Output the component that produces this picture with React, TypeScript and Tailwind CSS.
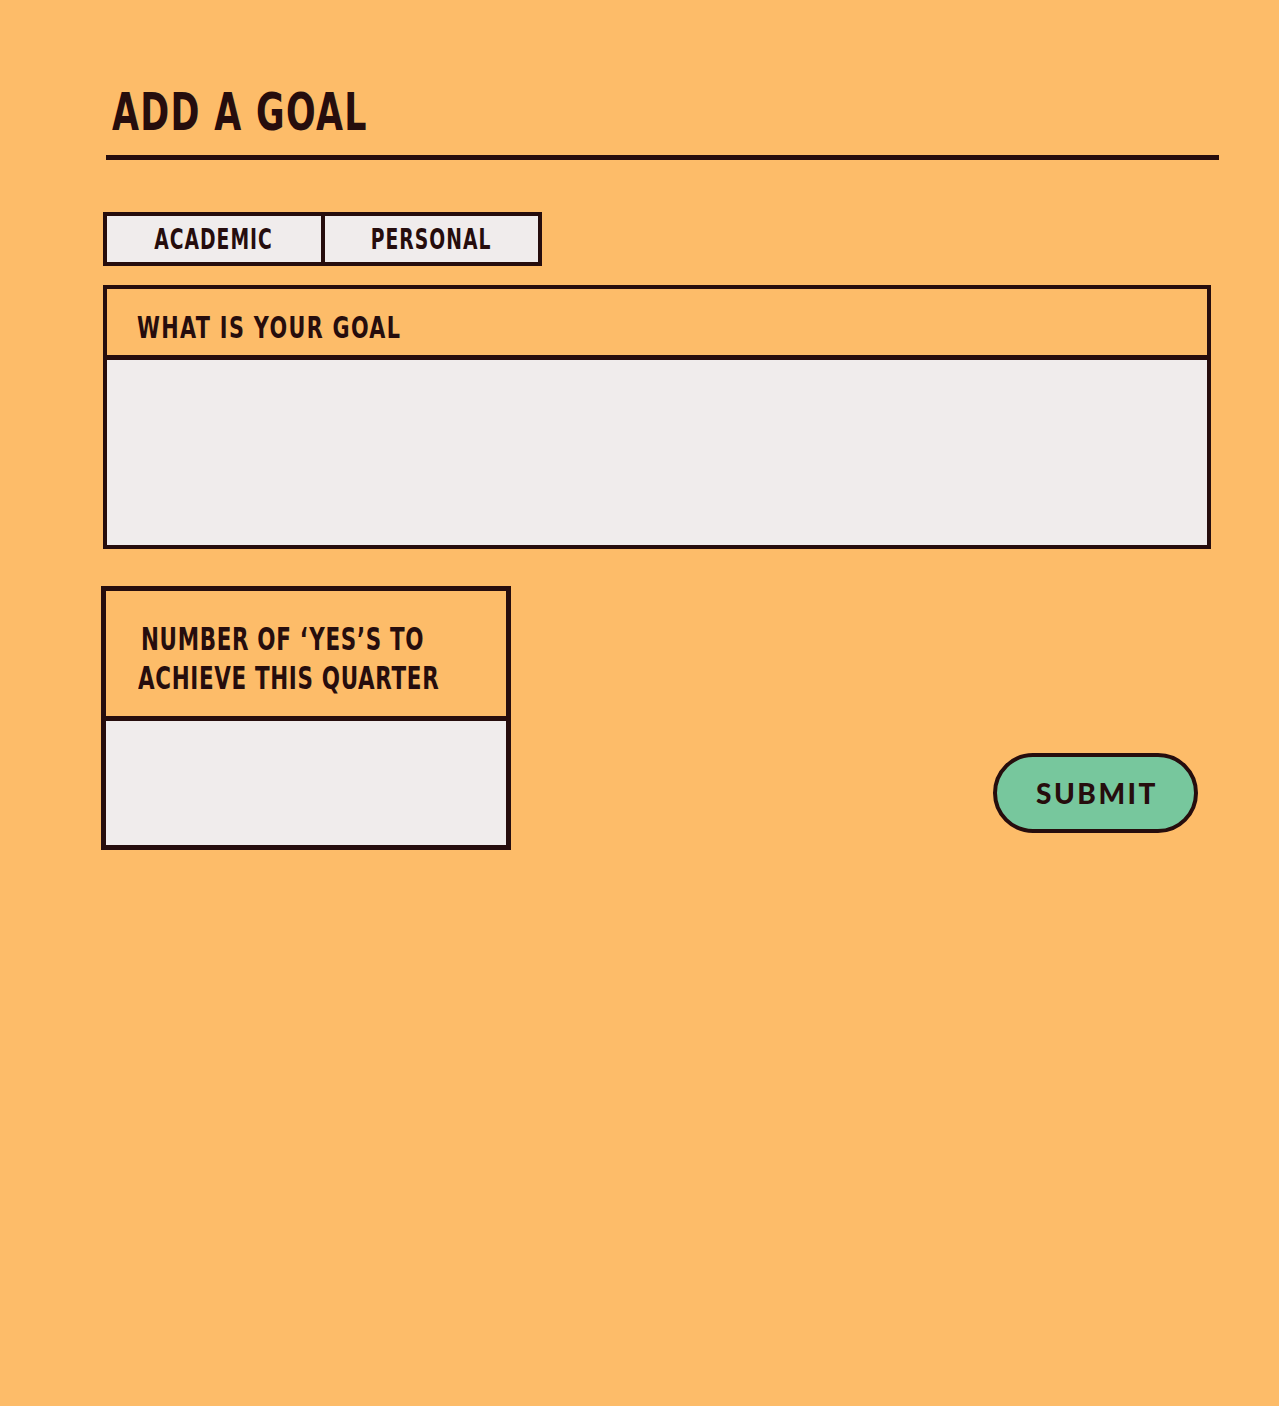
const cond = { fontFamily: '"DejaVu Sans", sans-serif' }

function Squeeze({ children, center = false }: { children: React.ReactNode; center?: boolean }) {
  return (
    <span className={center ? 'inline-block origin-center scale-x-[0.67] whitespace-nowrap' : 'inline-block origin-left scale-x-[0.67] whitespace-nowrap'}>
      {children}
    </span>
  )
}

export default function App() {
  return (
    <div className="min-h-[1406px] w-full bg-[#FDBC69] text-[#260D0D]">
      <div className="pl-[103px] pt-[84px]">
        {/* heading */}
        <div className="w-[1116px] pl-[3px]">
          <h1 className="pl-[6px] text-[52px] font-bold leading-[56px] tracking-[2px]" style={cond}>
            <Squeeze>ADD A GOAL</Squeeze>
          </h1>
          <div className="mt-[15px] h-[5px] w-[1113px] bg-[#260D0D]" />
        </div>

        {/* tabs */}
        <div className="mt-[52px] flex h-[54px] w-[439px] border-4 border-[#260D0D] bg-[#F0ECEC]" style={cond}>
          <button className="flex flex-1 items-center justify-center border-r-4 border-[#260D0D] pt-[2px] text-[28px] font-bold leading-none tracking-[1.5px]">
            <Squeeze center>ACADEMIC</Squeeze>
          </button>
          <button className="flex flex-1 items-center justify-center pt-[2px] text-[28px] font-bold leading-none tracking-[1.5px]">
            <Squeeze center>PERSONAL</Squeeze>
          </button>
        </div>

        {/* goal box */}
        <div className="mt-[19px] flex h-[264px] w-[1108px] flex-col border-4 border-[#260D0D]">
          <div className="-mr-[3px] flex h-[71px] items-center border-b-[5px] border-[#260D0D] pl-[30px] pt-[10px] text-[31px] font-bold leading-none tracking-[2px]" style={cond}>
            <Squeeze>WHAT IS YOUR GOAL</Squeeze>
          </div>
          <div className="flex-1 bg-[#F0ECEC]" />
        </div>

        <div className="mt-[37px] flex w-[1095px] items-start justify-between">
          {/* number box */}
          <div className="-ml-[2px] flex h-[264px] w-[410px] flex-col border-[5px] border-[#260D0D]">
            <div className="flex h-[130px] flex-col justify-center border-b-[5px] border-[#260D0D] pl-[32px] pt-[10px] text-[32px] font-bold leading-[39px] tracking-[1px]" style={cond}>
              <span className="pl-[3px]"><Squeeze>NUMBER OF ‘YES’S TO</Squeeze></span>
              <span><Squeeze>ACHIEVE THIS QUARTER</Squeeze></span>
            </div>
            <div className="flex-1 bg-[#F0ECEC]" />
          </div>

          {/* submit */}
          <button
            className="mt-[167px] flex h-[80px] w-[205px] items-center justify-center rounded-full border-4 border-[#260D0D] bg-[#77C79D] pl-[3px] text-[28px] font-black tracking-[2.5px]"
            style={{ fontFamily: 'Lato, "Open Sans", sans-serif' }}
          >
            SUBMIT
          </button>
        </div>
      </div>
    </div>
  )
}
